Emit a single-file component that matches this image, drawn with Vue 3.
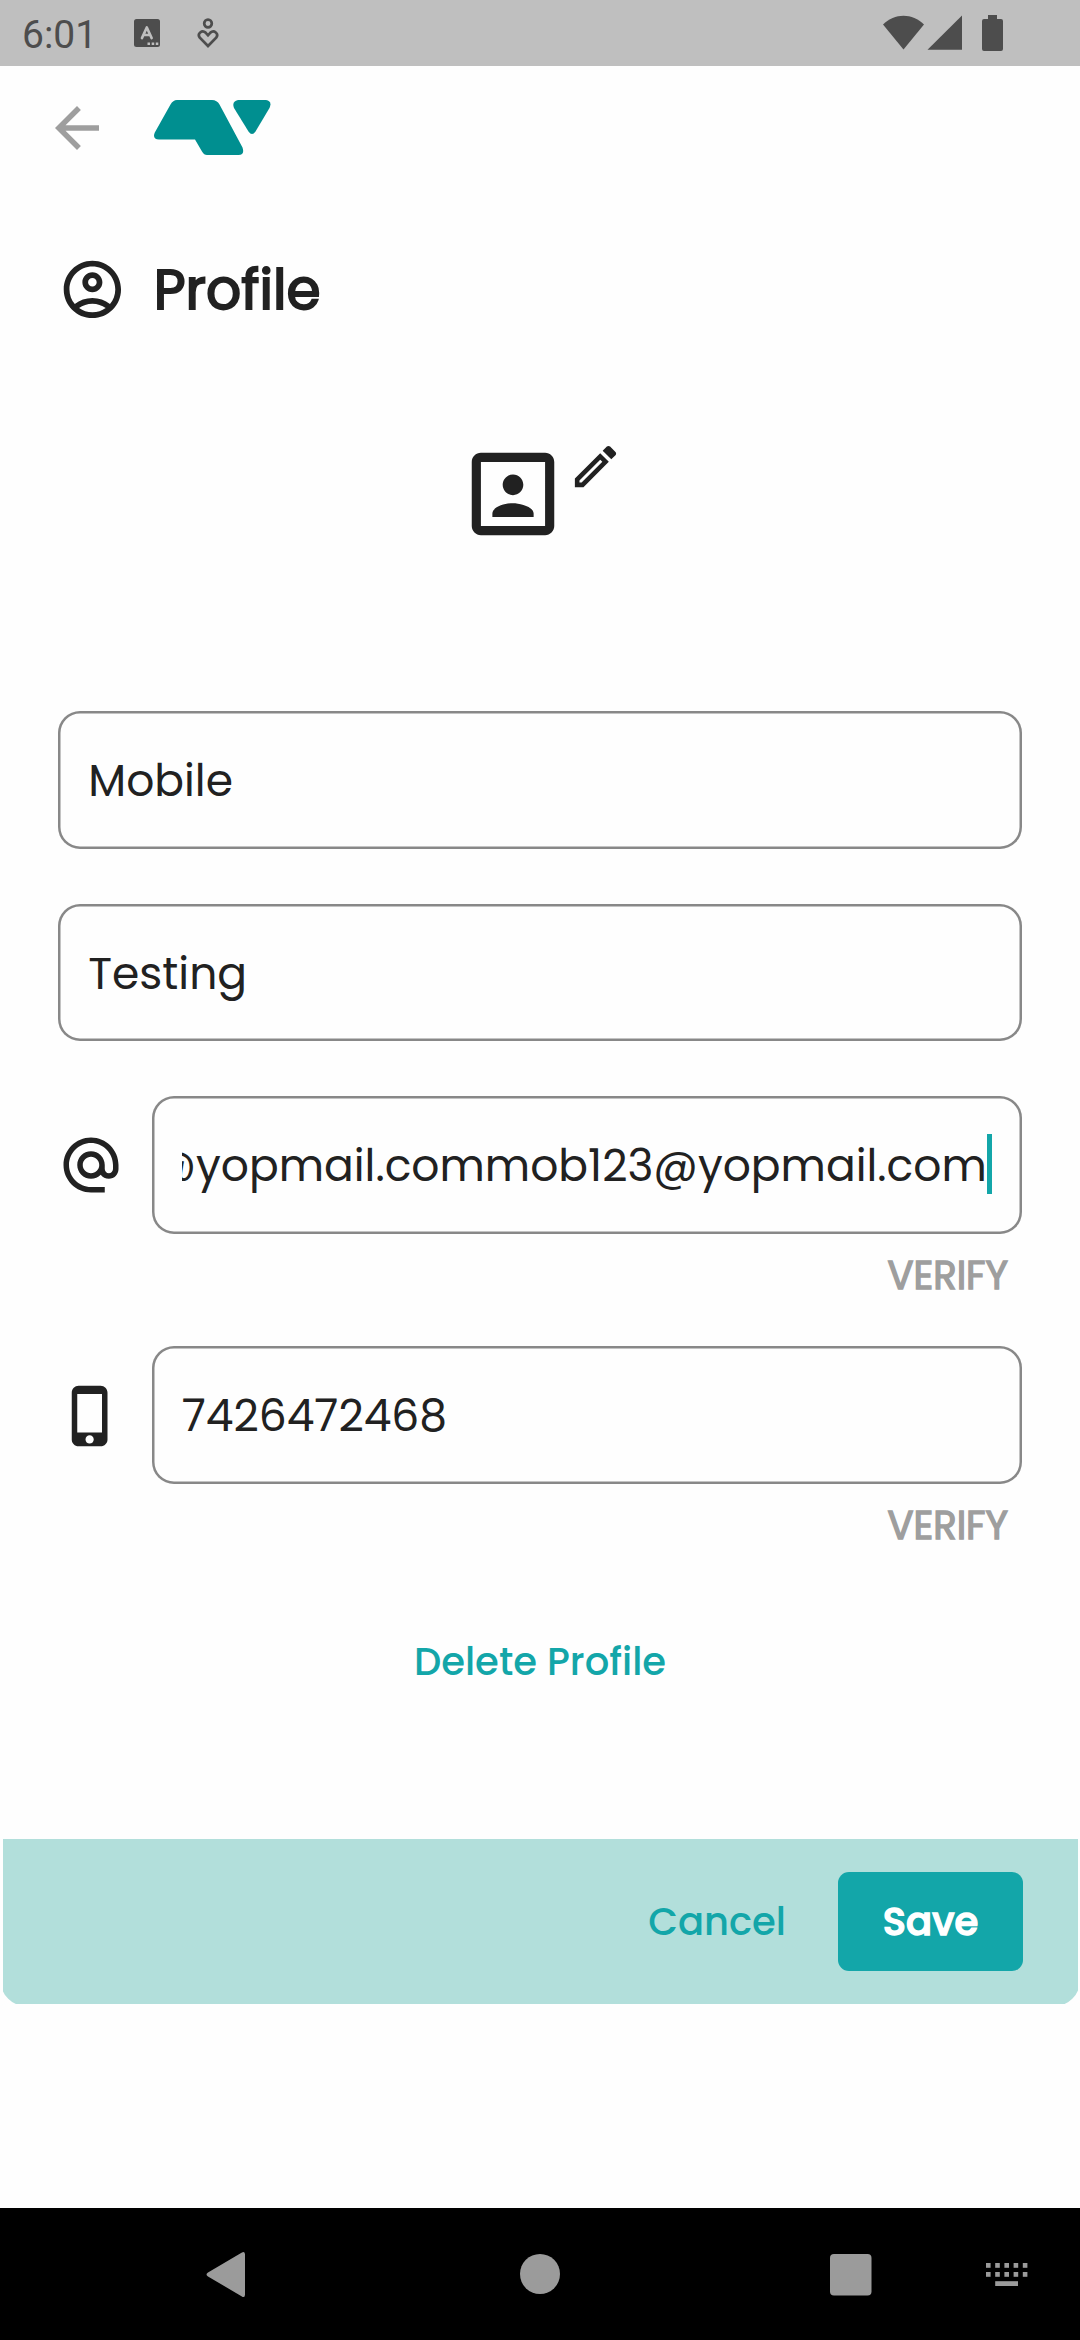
<script setup>
const email = 'mob123@yopmail.commob123@yopmail.com'
const keys = [0, 9.2, 18.4, 27.6, 36.8]
</script>

<template>
  <div class="screen">
    <header class="status">
      <span class="time">6:01</span>
      <svg class="st-a" width="26" height="28" viewBox="0 0 26 28">
        <rect width="26" height="28" rx="2.5" fill="#4d4d4d" />
        <path d="M8 19 12.800 8.500l4.800 10.500M9.500 16h6.600" fill="none" stroke="#bfbfbf" stroke-width="2.700" stroke-linecap="round" stroke-linejoin="round" />
        <path d="M13.500 23.500h2.500v2.500h-2.500zM17.700 23.500h2.500v2.500h-2.500zM21.800 23.500h2.500v2.500h-2.500z" fill="#bfbfbf" />
      </svg>
      <svg class="st-care" width="22" height="30" viewBox="0 0 22 30">
        <g fill="none" stroke="#4d4d4d" stroke-width="2.700">
          <circle cx="11" cy="5.500" r="3.800" />
          <path d="M11 28 2.800 19.600C-.2 15.500 5 11.600 8.600 14.600L11 17.300l2.400-2.700c3.600-3 8.800.9 5.800 5z" />
        </g>
      </svg>
      <span class="grow"></span>
      <svg width="122" height="37" viewBox="0 0 122 37" fill="#4d4d4d">
        <path d="M0 9.500C11.500-2.300 29.500-2.300 41 9.500L20.500 34.500z" />
        <path d="M79 .5V34.700H44.500z" />
        <path d="M105 0h9v4h4a2 2 0 0 1 2 2v28a2 2 0 0 1-2 2h-17a2 2 0 0 1-2-2V6a2 2 0 0 1 2-2h4z" />
      </svg>
    </header>

    <nav class="appbar">
      <svg width="66" height="66" viewBox="0 0 24 24" fill="#9e9e9e"><path d="M20 11H7.830l5.590-5.590L12 4l-8 8 8 8 1.410-1.410L7.830 13H20v-2z" /></svg>
      <svg class="logo" width="117" height="55" viewBox="0 0 117 55" fill="#008f90">
        <path d="M23 0H58Q63 0 65.500 4.500L88.500 47.500Q91 55 84.500 55H53Q50 55 48 51.500L41 39.500H5Q-2 39 .8 32.500L16.500 4.500Q19 0 23 0z" />
        <path d="M84 0H112Q118.500 1 115.500 8L101.500 31.500Q98 36.500 94.500 31.500L80 8Q77.500 1.500 84 0z" />
      </svg>
    </nav>

    <main>
      <section class="title">
        <svg width="68.750" height="68.750" viewBox="0 0 24 24" fill="#212121"><path fill-rule="evenodd" d="M12 2C6.480 2 2 6.480 2 12s4.480 10 10 10 10-4.480 10-10S17.520 2 12 2zM7.350 18.500C8.660 17.560 10.260 17 12 17s3.340.56 4.650 1.500C15.340 19.440 13.740 20 12 20s-3.340-.56-4.650-1.500zm10.790-1.380C16.450 15.800 14.320 15 12 15s-4.450.8-6.140 2.120C4.700 15.730 4 13.950 4 12c0-4.420 3.580-8 8-8s8 3.580 8 8c0 1.950-.7 3.730-1.860 5.120zM12 6c-1.930 0-3.500 1.570-3.500 3.500S10.070 13 12 13s3.500-1.570 3.500-3.500S13.930 6 12 6zm0 5c-.83 0-1.500-.67-1.500-1.500S11.170 8 12 8s1.500.67 1.500 1.500S12.830 11 12 11z" /></svg>
        <h1>Profile</h1>
      </section>

      <section class="avatar">
        <svg width="110" height="110" viewBox="0 0 24 24" fill="#212121"><path d="M12 12.250c1.240 0 2.250-1.010 2.250-2.250S13.240 7.750 12 7.750 9.750 8.760 9.750 10s1.010 2.250 2.250 2.250zm4.500 4c0-1.500-3-2.250-4.500-2.250s-4.500.75-4.500 2.250V17h9v-.75zM19 3H5c-1.100 0-2 .9-2 2v14c0 1.100.9 2 2 2h14c1.100 0 2-.9 2-2V5c0-1.100-.9-2-2-2zm0 16H5V5h14v14z" /></svg>
        <svg width="55" height="55" viewBox="0 0 24 24" fill="#212121"><path d="M14.060 9.020l.92.92L5.920 19H5v-.92l9.060-9.060M17.660 3c-.25 0-.51.100-.7.290l-1.830 1.830 3.750 3.750 1.830-1.830c.39-.39.39-1.020 0-1.410l-2.340-2.340c-.2-.2-.45-.29-.71-.29zm-3.600 3.190L3 17.250V21h3.750L17.810 9.940l-3.750-3.750z" /></svg>
      </section>

      <form>
        <div class="field">Mobile</div>
        <div class="field second">Testing</div>

        <div class="row">
          <svg width="66" height="66" viewBox="0 0 24 24" fill="#212121"><path d="M12 2C6.480 2 2 6.480 2 12s4.480 10 10 10h5v-2h-5c-4.340 0-8-3.660-8-8s3.660-8 8-8 8 3.660 8 8v1.430c0 .79-.71 1.570-1.500 1.570s-1.500-.78-1.500-1.570V12c0-2.760-2.240-5-5-5s-5 2.240-5 5 2.240 5 5 5c1.380 0 2.640-.56 3.540-1.470.65.89 1.770 1.470 2.960 1.470 1.970 0 3.500-1.600 3.500-3.570V12c0-5.520-4.480-10-10-10zm0 13c-1.660 0-3-1.340-3-3s1.340-3 3-3 3 1.340 3 3-1.340 3-3 3z" /></svg>
          <div class="field">
            <div class="clip"><span>{{ email }}</span><i class="caret"></i></div>
          </div>
        </div>
        <div class="verify">VERIFY</div>

        <div class="row">
          <svg class="phone" width="66" height="66" viewBox="0 0 24 24" fill="#212121"><path d="M15.500 1h-8C6.120 1 5 2.120 5 3.500v17C5 21.880 6.120 23 7.500 23h8c1.380 0 2.500-1.120 2.500-2.500v-17C18 2.120 16.880 1 15.500 1zm-4 21c-.83 0-1.500-.67-1.500-1.500s.67-1.500 1.500-1.500 1.500.67 1.500 1.500-.67 1.500-1.500 1.500zm4.500-4H7V4h9v14z" /></svg>
          <div class="field">7426472468</div>
        </div>
        <div class="verify">VERIFY</div>
      </form>

      <div class="delete">Delete Profile</div>

      <footer class="actions">
        <span class="cancel">Cancel</span>
        <button class="save">Save</button>
      </footer>
    </main>

    <div class="sysnav">
      <svg width="1080" height="132" viewBox="0 0 1080 132" fill="#9b9b9b">
        <path d="M241.500 44.800Q245 42.500 245 46.500V86.500Q245 90.500 241.500 88.200L208 68.500Q205 66.500 208 64.500z" />
        <circle cx="540" cy="66" r="20" />
        <rect x="830" y="46" width="41.500" height="41.500" rx="4" />
        <g>
          <rect v-for="k in keys" :key="'a' + k" :x="986 + k" y="55" width="4.600" height="4.800" />
          <rect v-for="k in keys" :key="'b' + k" :x="986 + k" y="64" width="4.600" height="4.800" />
          <rect x="995.200" y="73.200" width="22.800" height="4.800" />
        </g>
      </svg>
    </div>
  </div>
</template>

<style>
body { background: #fefefe; }
</style>

<style scoped>
.screen {
  width: 1080px;
  height: 2340px;
  display: flex;
  flex-direction: column;
  overflow: hidden;
  background: #fefefe;
  color: #212121;
  font-family: Poppins, Inter, sans-serif;
}
svg { display: block; flex: none; }
.status {
  height: 66px;
  box-sizing: border-box;
  padding: 15px 75px 0 22px;
  display: flex;
  align-items: flex-start;
  background: #bfbfbf;
}
.time {
  width: 111px;
  font: 400 39px/41px Roboto, sans-serif;
  color: #4d4d4d;
}
.st-a { margin: 4px 37px 0 0.500px; }
.st-care { margin-top: 3px; }
.grow { flex: 1; }
.appbar {
  height: 124px;
  display: flex;
  align-items: center;
  gap: 44px;
  padding-left: 44px;
}
.logo { margin-top: -1px; }
main { flex: 1; }
.title {
  margin: 65.700px 0 0 58px;
  height: 68px;
  display: flex;
  align-items: center;
  gap: 27px;
}
h1 {
  margin: 0;
  padding-top: 1px;
  font-size: 55px;
  line-height: 68px;
  font-weight: 400;
  -webkit-text-stroke: 1.900px currentColor;
}
.avatar {
  height: 272.600px;
  margin-top: 115px;
  padding-left: 457.700px;
  display: flex;
  align-items: flex-start;
}
form { padding: 0 58px; }
.field {
  height: 137.500px;
  box-sizing: border-box;
  border-radius: 22px;
  box-shadow: inset 0 0 0 2.500px #888;
  padding: 2px 30.250px 0;
  display: flex;
  align-items: center;
  font-size: 44px;
  line-height: 60px;
}
.second { margin: 55px 0; }
.row { display: flex; align-items: center; gap: 27.500px; }
.row .field { flex: 1; min-width: 0; }
.phone { margin-top: 1px; }
.clip {
  flex: 1;
  min-width: 0;
  padding: 4px 0;
  display: flex;
  justify-content: flex-end;
  align-items: center;
  overflow: hidden;
  white-space: nowrap;
}
.caret {
  flex: none;
  width: 5px;
  height: 60px;
  margin: -2px 0 2px;
  background: #13a6a9;
}
.verify {
  height: 112.500px;
  box-sizing: border-box;
  padding: 12.500px 14px 0 0;
  text-align: right;
  font-size: 38.500px;
  line-height: 60px;
  font-weight: 400;
  -webkit-text-stroke: 1.400px currentColor;
  color: #9e9e9e;
}
.delete {
  margin-top: 35.700px;
  height: 207px;
  text-align: center;
  font-size: 38.500px;
  line-height: 60px;
  font-weight: 500;
  color: #13a6a9;
}
.actions {
  height: 165px;
  box-sizing: border-box;
  margin: 0 2.500px 0 3px;
  padding-right: 54.500px;
  display: flex;
  align-items: center;
  justify-content: flex-end;
  gap: 52px;
  background: #b2dfdb;
  clip-path: inset(0 -3px -3px -3px round 0 0 28px 28px);
  font-size: 38.500px;
}
.cancel { color: #13a6a9; font-weight: 500; }
.save {
  width: 185px;
  height: 99px;
  padding: 0;
  border: 0;
  border-radius: 11px;
  background: #13a6a9;
  color: #fff;
  font: 500 38.500px Poppins, Inter, sans-serif;
  -webkit-text-stroke: 1.400px currentColor;
}
.sysnav { height: 132px; background: #000; }
</style>
